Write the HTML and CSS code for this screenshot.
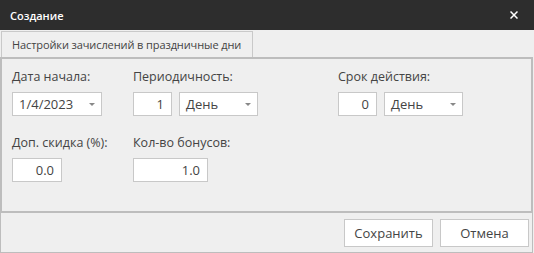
FILE: index.html
```html
<!DOCTYPE html>
<html lang="ru">
<head>
    <meta charset="UTF-8">
    <title>Создание</title>
    <link rel="stylesheet" href="styles.css">
</head>
<body>
    <div class="window">
        <div class="titlebar">
            <span class="title">Создание</span>
            <svg class="close" width="8" height="8" viewBox="0 0 8 8">
                <path d="M0.5 0.5 L7.5 7.5 M7.5 0.5 L0.5 7.5" stroke="#fff" stroke-width="1.5"/>
            </svg>
        </div>
        <div class="tabs">
            <div class="tab">Настройки зачислений в праздничные дни</div>
        </div>
        <div class="panel">
            <div class="row">
                <div class="field col-1">
                    <div class="label">Дата начала:</div>
                    <div class="combo combo-date"><span>1/4/2023</span><i class="arrow"></i></div>
                </div>
                <div class="field col-2">
                    <div class="label">Периодичность:</div>
                    <div class="pair">
                        <div class="num num-short">1</div>
                        <div class="combo combo-unit"><span>День</span><i class="arrow"></i></div>
                    </div>
                </div>
                <div class="field">
                    <div class="label">Срок действия:</div>
                    <div class="pair">
                        <div class="num num-short">0</div>
                        <div class="combo combo-unit"><span>День</span><i class="arrow"></i></div>
                    </div>
                </div>
            </div>
            <div class="row row-second">
                <div class="field col-1">
                    <div class="label">Доп. скидка (%):</div>
                    <div class="num num-discount">0.0</div>
                </div>
                <div class="field col-2">
                    <div class="label">Кол-во бонусов:</div>
                    <div class="num num-bonus">1.0</div>
                </div>
            </div>
        </div>
        <div class="footer">
            <button type="button" class="btn">Сохранить</button>
            <button type="button" class="btn">Отмена</button>
        </div>
    </div>
</body>
</html>
```

FILE: styles.css
```css
html, body {
    margin: 0;
    padding: 0;
    background-color: #efefef;
    font-family: "Open Sans", "Noto Sans", sans-serif;
    color: #444;
}

.window {
    width: 534px;
    height: 253px;
    display: flex;
    flex-direction: column;
}

.titlebar {
    height: 30px;
    background-color: #2d2d2d;
    display: flex;
    align-items: center;
    justify-content: space-between;
    padding: 0 16px 0 10px;
    box-sizing: border-box;
}

.title {
    color: #fff;
    font-size: 11px;
    font-weight: 600;
}

.tabs {
    display: flex;
    padding: 1px 0 0 1px;
}

.tab {
    height: 26px;
    box-sizing: border-box;
    border: 1px solid #c9c9c9;
    border-bottom: none;
    padding: 0 11px 0 10px;
    font-size: 11px;
    letter-spacing: -0.1px;
    line-height: 25px;
    color: #444;
    background-color: #efefef;
}

.panel {
    height: 156px;
    box-sizing: border-box;
    border: 2px solid #bdbdbd;
    margin-right: 1px;
    padding: 9px 10px 0 10px;
}

.row {
    display: flex;
}

.row-second {
    margin-top: 18px;
}

.col-1 {
    width: 121px;
}

.col-2 {
    width: 205px;
}

.label {
    font-size: 12.5px;
    line-height: 18px;
    margin-bottom: 6px;
}

.pair {
    display: flex;
    gap: 7px;
}

.combo, .num {
    height: 24px;
    box-sizing: border-box;
    background-color: #fff;
    border: 1px solid #c8c8c8;
    font-size: 13px;
    line-height: 22px;
    color: #444;
}

.combo {
    display: flex;
    align-items: center;
    justify-content: space-between;
    padding: 0 6px 0 6px;
}

.combo-date {
    width: 90px;
}

.combo-unit {
    width: 79px;
}

.arrow {
    width: 0;
    height: 0;
    border-left: 3px solid transparent;
    border-right: 3px solid transparent;
    border-top: 3px solid #888;
}

.num {
    text-align: right;
    padding-right: 7px;
}

.num-short {
    width: 39px;
}

.num-discount {
    width: 50px;
}

.num-bonus {
    width: 75px;
}

.footer {
    flex-grow: 1;
    border: 1px solid #bdbdbd;
    border-top: none;
    margin-right: 1px;
    display: flex;
    justify-content: flex-end;
    align-items: center;
    gap: 7px;
    padding-right: 3px;
}

.btn {
    width: 89px;
    height: 28px;
    background-color: #fff;
    border: 1px solid #c8c8c8;
    font-family: "Open Sans", "Noto Sans", sans-serif;
    font-size: 13px;
    color: #444;
    padding: 0;
}
```
